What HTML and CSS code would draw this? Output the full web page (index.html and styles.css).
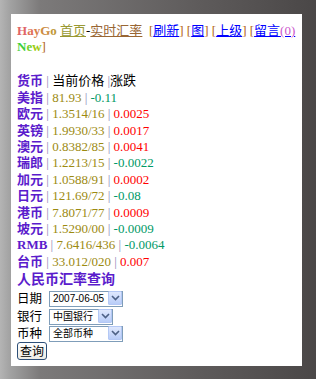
FILE: index.html
```html
<!DOCTYPE html>
<html lang="zh-CN">
<head>
    <meta charset="UTF-8">
    <meta name="viewport" content="width=device-width, initial-scale=1.0">
    <title>实时汇率</title>
    <link rel="stylesheet" href="styles.css">
</head>
<body>
    <div class="screen">
        <!-- Header -->
        <div class="header">
            <b class="logo"><span class="c1">H</span><span class="c2">a</span><span class="c3">y</span><span class="c4">G</span><span class="c5">o</span></b>
            <a href="#" class="home">首页</a>-<a href="#" class="current">实时汇率</a>&nbsp;&nbsp;<span class="br">[</span><a href="#" class="nav">刷新</a><span class="br">]</span>
            <span class="br">[</span><a href="#" class="nav">图</a><span class="br">]</span>
            <span class="br">[</span><a href="#" class="nav">上级</a><span class="br">]</span>
            <span class="br">[</span><a href="#" class="nav">留言<span class="count">(0)</span></a><br>
            <b class="new"><span class="n1">N</span><span class="n2">e</span><span class="n3">w</span></b><span class="br">]</span>
        </div>

        <!-- Rates -->
        <div class="rates">
            <div class="row head"><b class="name">货币</b> <span class="sep">|</span> 当前价格 <span class="sep">|</span>涨跌</div>
            <div class="row"><b class="name">美指</b> <span class="sep">|</span> <span class="price">81.93</span> <span class="sep">|</span> <span class="down">-0.11</span></div>
            <div class="row"><b class="name">欧元</b> <span class="sep">|</span> <span class="price">1.3514/16</span> <span class="sep">|</span> <span class="up">0.0025</span></div>
            <div class="row"><b class="name">英镑</b> <span class="sep">|</span> <span class="price">1.9930/33</span> <span class="sep">|</span> <span class="up">0.0017</span></div>
            <div class="row"><b class="name">澳元</b> <span class="sep">|</span> <span class="price">0.8382/85</span> <span class="sep">|</span> <span class="up">0.0041</span></div>
            <div class="row"><b class="name">瑞郎</b> <span class="sep">|</span> <span class="price">1.2213/15</span> <span class="sep">|</span> <span class="down">-0.0022</span></div>
            <div class="row"><b class="name">加元</b> <span class="sep">|</span> <span class="price">1.0588/91</span> <span class="sep">|</span> <span class="up">0.0002</span></div>
            <div class="row"><b class="name">日元</b> <span class="sep">|</span> <span class="price">121.69/72</span> <span class="sep">|</span> <span class="down">-0.08</span></div>
            <div class="row"><b class="name">港币</b> <span class="sep">|</span> <span class="price">7.8071/77</span> <span class="sep">|</span> <span class="up">0.0009</span></div>
            <div class="row"><b class="name">坡元</b> <span class="sep">|</span> <span class="price">1.5290/00</span> <span class="sep">|</span> <span class="down">-0.0009</span></div>
            <div class="row"><b class="name">RMB</b> <span class="sep">|</span> <span class="price">7.6416/436</span> <span class="sep">|</span> <span class="down">-0.0064</span></div>
            <div class="row"><b class="name">台币</b> <span class="sep">|</span> <span class="price">33.012/020</span> <span class="sep">|</span> <span class="up">0.007</span></div>
        </div>

        <!-- Query form -->
        <h2 class="title">人民币汇率查询</h2>
        <form class="query">
            <div class="field">
                <label>日期</label>
                <span class="select w74">
                    <select><option>2007-06-05</option></select>
                    <span class="arrow"><svg width="9" height="6" viewBox="0 0 9 6"><path d="M1 1l3.5 3.5L8 1" fill="none" stroke="#4d6185" stroke-width="1.6"/></svg></span>
                </span>
            </div>
            <div class="field">
                <label>银行</label>
                <span class="select w64">
                    <select><option>中国银行</option></select>
                    <span class="arrow"><svg width="9" height="6" viewBox="0 0 9 6"><path d="M1 1l3.5 3.5L8 1" fill="none" stroke="#4d6185" stroke-width="1.6"/></svg></span>
                </span>
            </div>
            <div class="field">
                <label>币种</label>
                <span class="select w74">
                    <select><option>全部币种</option></select>
                    <span class="arrow"><svg width="9" height="6" viewBox="0 0 9 6"><path d="M1 1l3.5 3.5L8 1" fill="none" stroke="#4d6185" stroke-width="1.6"/></svg></span>
                </span>
            </div>
            <button type="submit">查询</button>
        </form>
    </div>
</body>
</html>
```

FILE: styles.css
```css
html, body {
    margin: 0;
    height: 100%;
}
body {
    background: linear-gradient(to right, #b4b4b4 0px, #a2a2a2 10px, #7c7a7a 40px, #5e5b5b 200px, #4a4747 316px);
    font-family: "Liberation Serif", "Noto Sans CJK SC", serif;
    font-size: 13px;
    overflow: hidden;
}
.screen {
    margin: 14px 14px 0 11px;
    height: 352px;
    box-sizing: border-box;
    background: #fff;
    padding: 9px 6px;
    line-height: 16.4px;
}
a {
    color: #0000ff;
}
.header {
    margin-bottom: 17.5px;
}
.logo .c1 { color: #e06468; }
.logo .c2 { color: #e07058; }
.logo .c3 { color: #d8804a; }
.logo .c4 { color: #cc8c40; }
.logo .c5 { color: #c09838; }
.new .n1 { color: #3cd03c; }
.new .n2 { color: #70d028; }
.new .n3 { color: #a0cc10; }
.home {
    color: #999933;
}
.current {
    color: #996633;
}
.br {
    color: #b06010;
}
.count {
    color: #cc55cc;
}
.name {
    color: #5b1ccc;
}
.row.head {
    color: #000;
}
.sep {
    color: #8a84b8;
}
.price {
    color: #9c8a10;
}
.up {
    color: #ff0000;
}
.down {
    color: #009966;
}
.title {
    margin: 0;
    font-size: 14px;
    line-height: 19px;
    color: #5b1ccc;
}
.query {
    margin: 0;
}
.field {
    display: flex;
    align-items: center;
    height: 17.6px;
}
label {
    width: 32px;
    font-family: "Noto Sans CJK SC", sans-serif;
    font-size: 12.5px;
    line-height: 16px;
}
.select {
    position: relative;
    display: inline-block;
    height: 16px;
}
.select select {
    appearance: none;
    -webkit-appearance: none;
    width: 100%;
    height: 16px;
    box-sizing: border-box;
    border: 1px solid #7f9db9;
    background: #fff;
    padding: 0 0 0 3px;
    margin: 0;
    font-family: "Liberation Sans", "Noto Sans CJK SC", sans-serif;
    font-size: 10px;
    line-height: 14px;
    color: #000;
}
.w74 { width: 74px; }
.w64 { width: 64px; }
.arrow {
    position: absolute;
    top: 1px;
    right: 1px;
    width: 14px;
    height: 14px;
    box-sizing: border-box;
    background: linear-gradient(#dfe8fd, #b9cdf8);
    border: 1px solid #b4c8f5;
    border-radius: 1px;
    display: flex;
    align-items: center;
    justify-content: center;
}
button {
    display: block;
    width: 30px;
    height: 18px;
    margin-top: 0;
    padding: 0;
    border: 1px solid #2d4f78;
    border-radius: 3px;
    background: linear-gradient(#ffffff, #ecebe4);
    font-family: "Noto Sans CJK SC", sans-serif;
    font-size: 12px;
    line-height: 15px;
    color: #000;
}
```
